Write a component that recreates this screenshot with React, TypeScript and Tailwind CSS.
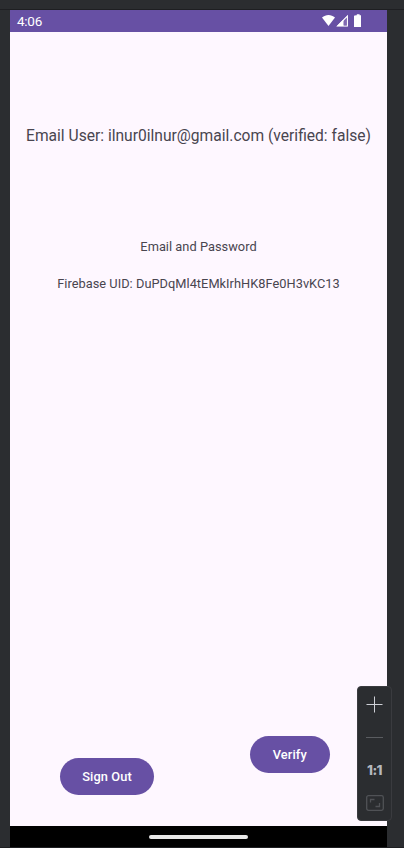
import React from "react";

function StatusIcons() {
  return (
    <svg className="mt-[3px] block h-4 w-[42px]" viewBox="0 0 42 16" fill="none">
      <path d="M1 4.6C4.8 1 10.2 1 14 4.6L7.5 13Z" fill="#fff" />
      <path d="M26.9 2V13.5H15.4Z" fill="#fff" fillOpacity="0.35" />
      <path d="M26.4 3.2V13H16.6Z" stroke="#fff" strokeWidth="1.1" />
      <path d="M22.3 6.8V13H16.1Z" fill="#fff" />
      <path d="M23 7.5L25.8 4.7V12.4H23Z" fill="#8069b2" />
      <path d="M35 2.2H35.8V1.2H38.6V2.2H40V14H33V2.8Z" fill="#fff" />
    </svg>
  );
}

function ZoomControls() {
  return (
    <div className="absolute top-[686px] left-[357px] h-[135px] w-[35px] rounded-[4px] border border-[#3a3b3f] bg-[#2b2d30]">
      <div className="flex h-full flex-col items-center">
        <svg className="mt-[9px] block h-[17px] w-[17px]" viewBox="0 0 17 17" stroke="#ced0d6">
          <path d="M0.5 8.5H16.5M8.5 0.5V16.5" />
        </svg>
        <svg className="mt-[24px] block h-[1px] w-[17px]" viewBox="0 0 17 1" stroke="#5a5c60">
          <path d="M0 0.5H17" />
        </svg>
        <div className="mt-[23px] h-[18px] font-['Inter',sans-serif] text-[13.5px] leading-[18px] font-extrabold tracking-[-0.6px] text-[#b4b8bf]">1:1</div>
        <svg className="mt-[16px] block h-4 w-[18px]" viewBox="0 0 18 16" fill="none" stroke="#505256">
          <rect x="0.7" y="0.7" width="16.6" height="14.6" rx="1.8" strokeWidth="1.3" />
          <path d="M4.5 7.5V4.5H8.5M9.5 11.5H13.5V8" strokeWidth="1.3" />
        </svg>
      </div>
    </div>
  );
}

export default function App() {
  return (
    <div className="relative flex h-[848px] w-[404px] flex-col overflow-hidden bg-[#2b2d30] font-['Roboto',sans-serif]">
      <div className="h-[10px] shrink-0 border-b border-[#1e1f22]" />
      <main className="ml-[10px] flex h-[837px] w-[377px] shrink-0 flex-col bg-[#fef7ff] text-[#49454f]">
        <header className="flex h-[22px] shrink-0 justify-between bg-[#6750a4] pr-[24px] pl-[7px] text-white">
          <span className="text-[13.5px] leading-[23px] tracking-[-0.25px]">4:06</span>
          <StatusIcons />
        </header>
        <section className="flex h-[704px] shrink-0 flex-col items-center whitespace-nowrap">
          <h1 className="mt-[94px] text-[15.6px] leading-[20px] font-normal">Email User: ilnur0ilnur@gmail.com (verified: false)</h1>
          <p className="mt-[92px] text-[12.8px] leading-[18px] tracking-[0.03px]">Email and Password</p>
          <p className="mt-[19px] text-[12.8px] leading-[18px] tracking-[0.03px]">Firebase UID: DuPDqMl4tEMkIrhHK8Fe0H3vKC13</p>
        </section>
        <div className="flex h-[90px] shrink-0 items-start pl-[50px] text-[12.8px] font-medium text-white">
          <button className="mt-[22px] h-[37px] w-[94px] rounded-full bg-[#6750a4] tracking-[0.1px]">Sign Out</button>
          <button className="ml-[95.5px] h-[37px] w-[80.5px] rounded-full bg-[#6750a4] tracking-[0.1px]">Verify</button>
        </div>
        <footer className="flex min-h-0 flex-1 justify-center bg-black">
          <div className="mt-[9px] h-[4px] w-[99px] rounded-full bg-[#e8e8e8]" />
        </footer>
      </main>
      <div className="h-px shrink-0 bg-[#1e1f22]" />
      <ZoomControls />
    </div>
  );
}
